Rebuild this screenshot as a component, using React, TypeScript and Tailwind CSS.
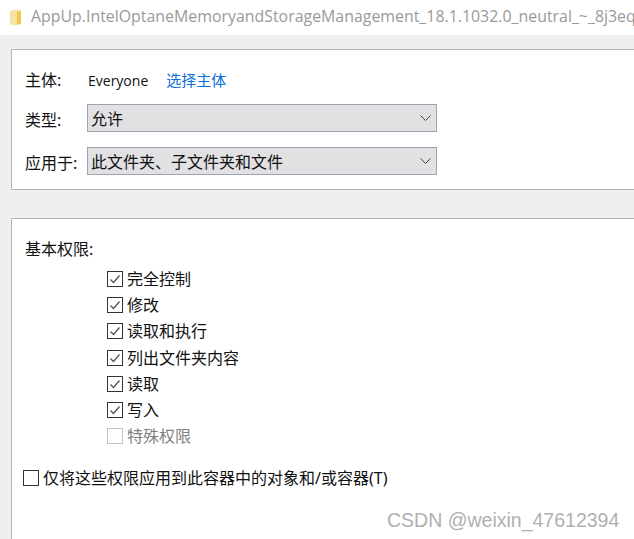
const font = "font-['Noto_Sans','Noto_Sans_CJK_SC',sans-serif]";

function Check({ label, checked = true, disabled = false }: { label: string; checked?: boolean; disabled?: boolean }) {
  return (
    <div className="flex h-[26.17px] items-center">
      <span className={`flex h-4 w-4 items-center justify-center border ${disabled ? "border-[#c4c4c4]" : "border-[#333]"}`}>
        {checked && (
          <svg width="14" height="14" viewBox="0 0 14 14" fill="none">
            <path d="M2.5 7.5L5.5 10.5L11.5 3.5" stroke="#555" strokeWidth="1.3" />
          </svg>
        )}
      </span>
      <span className={`ml-1 text-[16px] leading-[20px] ${disabled ? "text-[#808080]" : "text-[#111]"}`}>{label}</span>
    </div>
  );
}

function Select({ value }: { value: string }) {
  return (
    <div className="flex h-[28px] w-[350px] items-center justify-between border border-[#9aa5b0] bg-[#e1e1e3] pl-[3px] pr-[2px] text-[16px] leading-[24px] text-[#111]">
      <span className="pt-[2px]">{value}</span>
      <svg width="16" height="14" viewBox="0 0 16 14" fill="none">
        <path d="M2.5 4.5L7.5 9.5L12.5 4.5" stroke="#444" strokeWidth="1" />
      </svg>
    </div>
  );
}

export default function App() {
  const permissions = ["完全控制", "修改", "读取和执行", "列出文件夹内容", "读取", "写入"];
  return (
    <div className={`relative flex h-[539px] w-[634px] flex-col overflow-hidden bg-[#efefef] ${font}`}>
      <div className="flex h-[35px] shrink-0 items-center overflow-hidden whitespace-nowrap bg-white pl-[10px] pb-[1px]">
        <svg width="12" height="17" viewBox="0 0 12 17" className="shrink-0">
          <path d="M0 2L6 0.5L11 1V15L6 16.5L0 15.5Z" fill="#f5e3a6" />
          <path d="M7 2.5H11V14.5L7 15.5Z" fill="#f0c84e" />
        </svg>
        <span className="ml-[9px] font-['Open_Sans',sans-serif] text-[15.9px] text-[#9a9a9a]">
          AppUp.IntelOptaneMemoryandStorageManagement_18.1.1032.0_neutral_~_8j3eq9
        </span>
      </div>

      <section className="ml-[11px] mt-[14px] h-[141px] w-[640px] shrink-0 border border-[#b4b4b4] bg-white pl-[13px] pt-[19px]">
        <div className="flex h-[22px] items-center text-[15px] text-[#111]">
          <span className="w-[63px] text-[16px]">主体:</span>
          <span className="font-['Open_Sans',sans-serif] text-[14px]">Everyone</span>
          <span className="ml-[18px] text-[#0a6fd8]">选择主体</span>
        </div>
        <div className="mt-[13px] flex items-center">
          <span className="w-[62px] pt-[4px] text-[16px] text-[#111]">类型:</span>
          <Select value="允许" />
        </div>
        <div className="mt-[14px] flex items-center">
          <span className="w-[62px] pt-[5px] text-[16px] text-[#111]">应用于:</span>
          <Select value="此文件夹、子文件夹和文件" />
        </div>
      </section>

      <section className="ml-[11px] mt-[28px] w-[640px] flex-1 border border-b-0 border-[#b4b4b4] bg-white pl-[11px] pt-[18px]">
        <div className="ml-[2px] text-[16px] leading-[24px] text-[#111]">基本权限:</div>
        <div className="ml-[84px] mt-[5px]">
          {permissions.map((p) => (
            <Check key={p} label={p} />
          ))}
          <Check label="特殊权限" checked={false} disabled />
        </div>
        <div className="mt-[16px] flex h-[26px] items-center">
          <span className="h-4 w-4 border border-[#333]" />
          <span className="ml-1 text-[16px] text-[#111]">仅将这些权限应用到此容器中的对象和/或容器(T)</span>
        </div>
      </section>

      <span className="absolute left-[387px] top-[509px] font-['Liberation_Sans',sans-serif] text-[19.5px] leading-[22px] text-[#b0b0b0]">
        CSDN @weixin_47612394
      </span>
    </div>
  );
}
